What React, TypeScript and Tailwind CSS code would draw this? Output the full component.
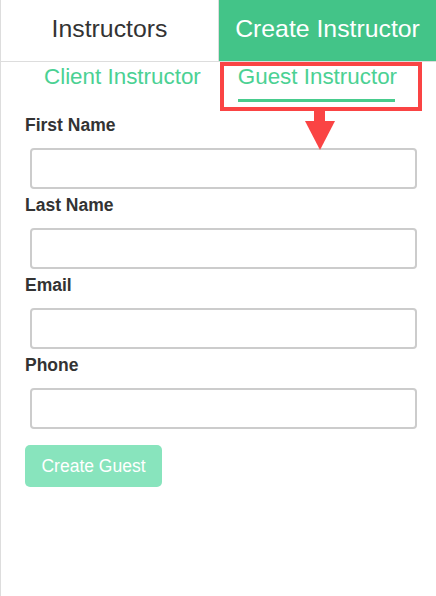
import React from "react";

const fields = ["First Name", "Last Name", "Email", "Phone"];

export default function App() {
  return (
    <div
      className="relative w-[436px] h-[596px] bg-white border-l border-[#dddddd] overflow-hidden"
      style={{ fontFamily: '"Liberation Sans", Arial, sans-serif' }}
    >
      <div className="flex h-[62px] border-b border-[#dddddd]">
        <div className="w-[218px] pb-[3px] border-r border-[#dddddd] flex items-center justify-center text-[24.8px] text-[#333333]">
          Instructors
        </div>
        <div className="flex-1 pb-[3px] bg-[#43c488] flex items-center justify-center text-[24.8px] text-white">
          Create Instructor
        </div>
      </div>

      <div className="flex h-[40px] pl-[43px] gap-[37px]">
        <div className="pt-[2px] text-[22.4px] leading-[26px] text-[#4bd193]">Client Instructor</div>
        <div className="flex flex-col pt-[2px]">
          <div className="text-[22.4px] leading-[26px] text-[#4bd193]">Guest Instructor</div>
          <div className="mt-[9px] h-[3px] bg-[#48cc8d] w-[157px]" />
        </div>
      </div>

      <div className="pl-[24px] pt-[11.5px]">
        {fields.map((f) => (
          <div key={f} className="mb-[4.5px]">
            <div className="h-[20px] leading-[22px] text-[17.5px] font-bold text-[#333333]">{f}</div>
            <input
              type="text"
              className="mt-[14.5px] ml-[5px] block w-[387px] h-[41px] border-2 border-[#cccccc] rounded-[4px] bg-white outline-none"
            />
          </div>
        ))}
        <button className="mt-[11.5px] w-[137px] h-[42px] rounded-[5px] bg-[#88e4bd] text-white text-[17.5px]">
          Create Guest
        </button>
      </div>

      <div className="absolute left-[219px] top-[62px] w-[202px] h-[49px] border-4 border-[#fa4444] pointer-events-none" />
      <svg className="absolute left-[300px] top-[109px] pointer-events-none" width="40" height="44" viewBox="0 0 40 44">
        <rect x="13" y="0" width="11" height="13" fill="#fa4444" />
        <polygon points="4,12 34,12 19,41" fill="#fa4444" />
      </svg>
    </div>
  );
}
